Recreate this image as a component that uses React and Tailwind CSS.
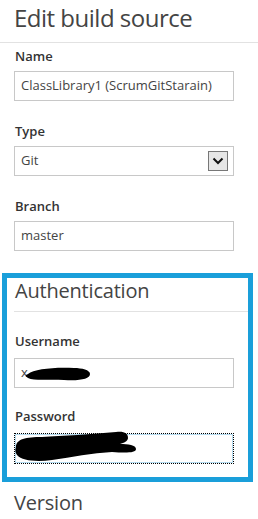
import React from "react";

function Label({ children, className = "" }) {
  return (
    <div className={"text-[13px] leading-none font-semibold text-[#333] pl-px " + className}>
      {children}
    </div>
  );
}

function Input({ children, className = "" }) {
  return (
    <div
      className={
        "w-[220px] h-[30px] border border-[#c8c8c8] bg-white flex items-center pl-[6px] text-[13px] text-[#444] " +
        className
      }
    >
      {children}
    </div>
  );
}

export default function App() {
  return (
    <div className="w-[258px] h-[519px] bg-white overflow-hidden font-['Open_Sans',sans-serif]">
      <div className="h-[42px] pt-[6px] pl-[14px] text-[24px] leading-none text-[#444] tracking-[-0.5px]">
        Edit build source
      </div>
      <div className="h-px bg-[#e2e2e2]" />
      <div className="px-[14px]">
        <Label className="mt-[7px]">Name</Label>
        <Input className="mt-[8px]">ClassLibrary1 (ScrumGitStarain)</Input>
        <Label className="mt-[24px]">Type</Label>
        <Input className="mt-[8px] justify-between pr-[5px]">
          <span>Git</span>
          <span className="w-[20px] h-[20px] border border-[#777] bg-[#e6e6e6] flex items-center justify-center">
            <svg width="12" height="8" viewBox="0 0 12 8">
              <path d="M1.5 1.5 L6 6 L10.5 1.5" fill="none" stroke="#111" strokeWidth="2" />
            </svg>
          </span>
        </Input>
        <Label className="mt-[24px]">Branch</Label>
        <Input className="mt-[8px]">master</Input>
      </div>

      <div className="mt-[22px] ml-[2px] w-[251px] border-[5px] border-[#1a9fda] pl-[7px] pb-[13px]">
        <div className="pt-[3px] pl-px text-[20px] leading-none text-[#444] tracking-[-0.2px]">
          Authentication
        </div>
        <div className="mt-[10px] h-px bg-[#e2e2e2]" />
        <Label className="mt-[23px]">Username</Label>
        <div className="relative mt-[10px] w-[220px]">
          <Input>x</Input>
          <svg className="absolute left-0 top-0" width="220" height="30" viewBox="0 0 220 30">
            <path
              d="M14 16 C 20 11, 40 9, 60 10 C 68 10, 76 12, 76 16 C 76 21, 66 23, 50 22 C 35 21, 20 23, 14 20 C 11 18, 11 17, 14 16 Z"
              fill="#000"
            />
          </svg>
        </div>
        <Label className="mt-[22px]">Password</Label>
        <div className="relative mt-[10px] w-[220px]">
          <div className="w-[220px] h-[31px] border border-dotted border-black shadow-[inset_0_0_0_1px_#b5dcf0] bg-white" />
          <svg className="absolute left-[-2px] top-[-2px] overflow-visible" width="222" height="33" viewBox="0 0 222 33">
            <path
              d="M4 16 C 4 8, 14 6, 30 6 C 50 5, 80 3, 104 1 C 112 0, 116 2, 116 7 C 116 10, 112 12, 108 13 C 116 13, 124 14, 124 18 C 124 22, 114 22, 100 21 C 80 22, 60 26, 40 29 C 25 31, 10 30, 5 24 C 3 21, 3 19, 4 16 Z"
              fill="#000"
            />
          </svg>
        </div>
      </div>

      <div className="mt-[11px] pl-[14px] text-[20px] leading-none text-[#444] tracking-[-0.2px]">
        Version
      </div>
    </div>
  );
}
